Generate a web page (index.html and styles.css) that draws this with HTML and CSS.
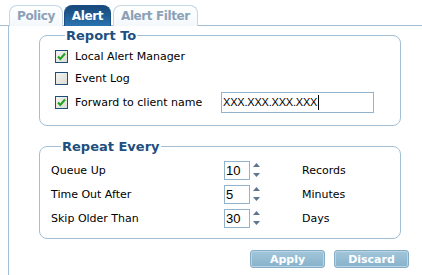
FILE: index.html
```html
<!DOCTYPE html>
<html lang="en">
<head>
  <meta charset="UTF-8" />
  <title>Alert</title>
  <link rel="stylesheet" href="styles.css">
</head>
<body>
  <nav class="tabs">
    <span class="tab">Policy</span>
    <span class="tab active">Alert</span>
    <span class="tab">Alert Filter</span>
  </nav>

  <main class="panel">
    <fieldset class="group report">
      <legend>Report To</legend>
      <div class="opt">
        <span class="check on"><svg viewBox="0 0 11 11"><path d="M2 5.5 L4.3 8 L9 2.5" /></svg></span>
        <span>Local Alert Manager</span>
      </div>
      <div class="opt">
        <span class="check"></span>
        <span>Event Log</span>
      </div>
      <div class="opt last">
        <span class="check on"><svg viewBox="0 0 11 11"><path d="M2 5.5 L4.3 8 L9 2.5" /></svg></span>
        <span class="opt-label">Forward to client name</span>
        <div class="textbox">XXX.XXX.XXX.XXX<span class="caret"></span></div>
      </div>
    </fieldset>

    <fieldset class="group repeat">
      <legend>Repeat Every</legend>
      <div class="row">
        <span>Queue Up</span>
        <span class="num">10</span>
        <span class="spin"><svg viewBox="0 0 7 14"><path d="M3.5 0 L7 4 L0 4 Z" /><path d="M0 10 L7 10 L3.5 14 Z" /></svg></span>
        <span>Records</span>
      </div>
      <div class="row">
        <span>Time Out After</span>
        <span class="num">5</span>
        <span class="spin"><svg viewBox="0 0 7 14"><path d="M3.5 0 L7 4 L0 4 Z" /><path d="M0 10 L7 10 L3.5 14 Z" /></svg></span>
        <span>Minutes</span>
      </div>
      <div class="row">
        <span>Skip Older Than</span>
        <span class="num">30</span>
        <span class="spin"><svg viewBox="0 0 7 14"><path d="M3.5 0 L7 4 L0 4 Z" /><path d="M0 10 L7 10 L3.5 14 Z" /></svg></span>
        <span>Days</span>
      </div>
    </fieldset>

    <div class="actions">
      <button class="btn">Apply</button>
      <button class="btn">Discard</button>
    </div>
  </main>
</body>
</html>
```

FILE: styles.css
```css
* {
  box-sizing: border-box;
}
body {
  margin: 0;
  background: #fff;
  color: #000;
  font-family: 'DejaVu Sans', Verdana, sans-serif;
  font-size: 11px;
  overflow: hidden;
}
.tabs {
  display: flex;
  align-items: flex-end;
  gap: 1px;
  height: 26px;
  padding-left: 9px;
  border-bottom: 1px solid #a3bfd6;
}
.tab {
  height: 21px;
  margin-bottom: -1px;
  padding: 0 7px;
  border: 1px solid #c5d7e6;
  border-bottom: none;
  border-radius: 8px 8px 0 0;
  background: linear-gradient(#fff, #f4f8fb);
  color: #8ba1b7;
  font-weight: bold;
  font-size: 12px;
  letter-spacing: -0.4px;
  line-height: 20px;
}
.tab.active {
  background: linear-gradient(#17477a, #2a74b0);
  border-color: #1a4f83;
  color: #fff;
}
.tab:last-child {
  margin-left: 1px;
}
.panel {
  margin-left: 8px;
  height: 249px;
  padding: 2px 13px 0 0;
  border-left: 1px solid #a3bfd6;
  display: flex;
  flex-direction: column;
}
.group {
  margin: 0 0 0 30px;
  width: 362px;
  padding: 0;
  border: 1px solid #a3bfd6;
  border-radius: 8px;
}
.group legend {
  margin-left: 10px;
  padding: 0 1px;
  color: #1d4f80;
  font-weight: bold;
  font-size: 13px;
  line-height: 15px;
}
.report {
  padding: 2px 0 11px 15px;
}
.repeat {
  margin-top: 13px;
  padding: 4px 0 8px 11px;
}
.opt {
  display: flex;
  align-items: center;
  height: 22px;
}
.opt + .opt {
  height: 23px;
}
.opt.last {
  height: 24px;
}
.check {
  width: 13px;
  height: 13px;
  margin-right: 7px;
  border: 1px solid #1c4f7c;
  background: linear-gradient(135deg, #f4f4f0, #dcdcd6);
  display: flex;
}
.check svg {
  width: 11px;
  height: 11px;
  fill: none;
  stroke: #21a121;
  stroke-width: 2;
}
.opt-label {
  width: 146px;
}
.textbox {
  width: 153px;
  height: 21px;
  padding-left: 1px;
  border: 1px solid #93b3cc;
  display: flex;
  align-items: center;
  font-family: 'Liberation Sans', Arial, sans-serif;
  font-size: 11px;
  letter-spacing: -0.2px;
}
.caret {
  width: 1px;
  height: 15px;
  margin-left: 1px;
  background: #000;
}
.row {
  display: grid;
  grid-template-columns: 173px 26px 52px auto;
  align-items: center;
  height: 24px;
}
.num {
  height: 19px;
  padding-left: 1px;
  border: 1px solid #93b3cc;
  font-family: 'Liberation Sans', Arial, sans-serif;
  font-size: 13px;
  line-height: 17px;
}
.spin {
  display: flex;
  margin-left: 3px;
}
.spin svg {
  width: 7px;
  height: 14px;
  fill: #5d7690;
}
.actions {
  display: flex;
  justify-content: flex-end;
  gap: 9px;
  margin-top: 11px;
}
.btn {
  width: 75px;
  height: 18px;
  padding: 0;
  border: 1px solid #86adc6;
  border-radius: 3px;
  background: linear-gradient(#a3c6da, #86b2cb);
  box-shadow: inset 0 0 0 1px #b9d5e5;
  color: #fff;
  font-family: 'DejaVu Sans', Verdana, sans-serif;
  font-weight: bold;
  font-size: 11px;
}
```
